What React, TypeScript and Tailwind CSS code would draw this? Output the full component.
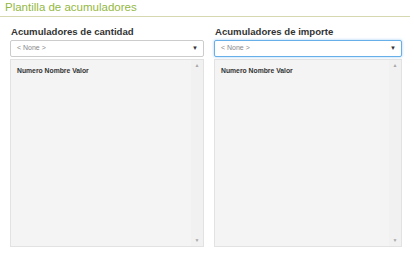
const Column = ({ label, focused, className }: { label: string; focused?: boolean; className: string }) => (
  <section className={`flex flex-col ${className}`}>
    <p className="h-[12px] pl-[1px] text-[9.6px] font-bold leading-[12px] text-[#333]">{label}</p>
    <div
      className={`mt-[2px] flex h-[17px] items-center justify-between rounded-[2px] border bg-white pl-[6px] pr-[5px] ${
        focused ? "border-[#66afe9] shadow-[0_0_3px_rgba(102,175,233,0.6)]" : "border-[#ccc]"
      }`}
    >
      <span className="text-[7px] text-[#888]">&lt; None &gt;</span>
      <span className="text-[6px] text-[#333]">▼</span>
    </div>
    <div className="mt-[2px] flex h-[188px] border border-[#e2e2e2] bg-[#f4f4f4]">
      <div className="flex-1 pl-[6px] pt-[6px]">
        <p className="text-[6.8px] font-bold text-[#333]">Numero Nombre Valor</p>
      </div>
      <div className="flex w-[12px] flex-col items-center justify-between bg-[#f1f1f1] py-[3px]">
        <span className="text-[5px] leading-none text-[#a8a8a8]">▲</span>
        <span className="text-[5px] leading-none text-[#a8a8a8]">▼</span>
      </div>
    </div>
  </section>
);

export default function App() {
  return (
    <div className="h-[254px] w-[414px] bg-white font-['Liberation_Sans',Arial,sans-serif]">
      <div className="mr-[4px] border-b border-[#d6d9b0] pb-[2px] pl-[5px] pt-[1px]">
        <h1 className="text-[11.5px] leading-[13px] text-[#93b843]">Plantilla de acumuladores</h1>
      </div>
      <div className="mt-[9px] flex">
        <Column label="Acumuladores de cantidad" className="ml-[10px] w-[194px]" />
        <Column label="Acumuladores de importe" focused className="ml-[10px] w-[188px]" />
      </div>
    </div>
  );
}
